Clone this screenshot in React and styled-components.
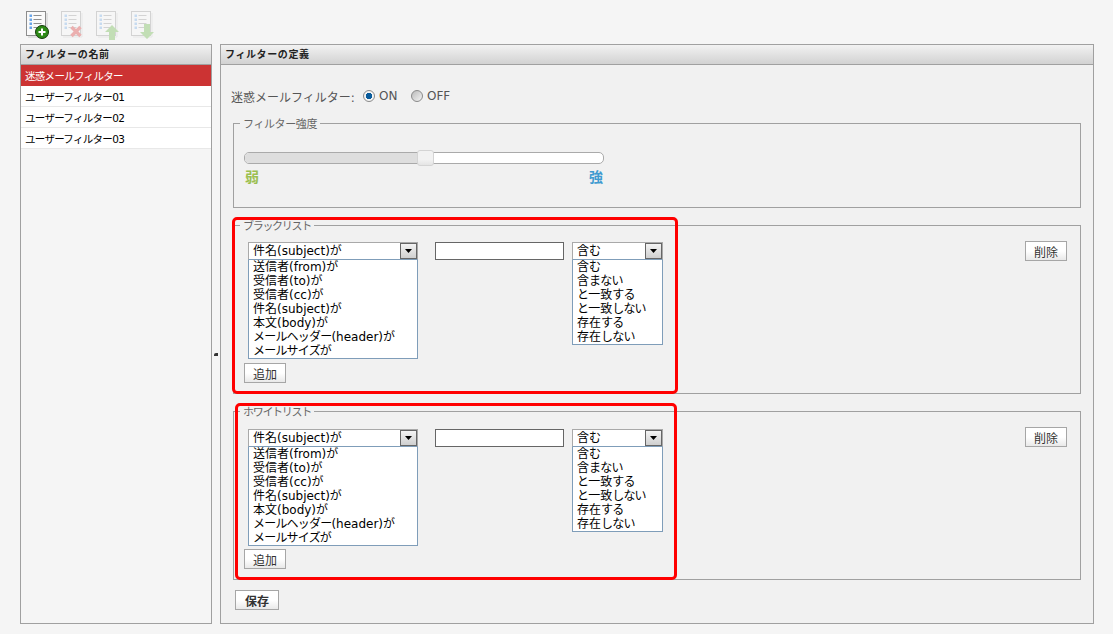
import React from "react";
import styled, { createGlobalStyle } from "styled-components";

const GlobalStyle = createGlobalStyle`
  html, body {
    margin: 0;
    padding: 0;
    background: #f5f5f5;
    font-family: "DejaVu Sans", "Noto Sans CJK JP", sans-serif;
    font-size: 12px;
    color: #000;
  }
  * { box-sizing: border-box; }
`;

const SUBJECTS = [
  "送信者(from)が",
  "受信者(to)が",
  "受信者(cc)が",
  "件名(subject)が",
  "本文(body)が",
  "メールヘッダー(header)が",
  "メールサイズが",
];
const CONDITIONS = ["含む", "含まない", "と一致する", "と一致しない", "存在する", "存在しない"];
const FILTERS = ["迷惑メールフィルター", "ユーザーフィルター01", "ユーザーフィルター02", "ユーザーフィルター03"];

// かなだけ詰める（元画像のプロポーショナルフォントに合わせる）
const renderLabel = (text) =>
  text.split(/([\u3040-\u30ff]+)/).map((part, i) => (i % 2 ? <Kana key={i}>{part}</Kana> : part));

const DocIcon = ({ badge, faded }) => (
  <svg width="28" height="31" viewBox="0 0 28 31" style={{ opacity: faded ? 0.32 : 1 }}>
    <rect x="1.5" y="1.5" width="19" height="24" fill="#fafafa" stroke="#8d8d8d" />
    <path d="M22 3v24H3" fill="none" stroke="#ccc" />
    {[5, 9, 13, 17].map((y) => (
      <g key={y}>
        <rect x="4.5" y={y - 0.5} width="2.5" height="2.5" fill="#6aa5e8" />
        <rect x="8.5" y={y} width="8" height="1" fill="#8f8f8f" />
      </g>
    ))}
    {badge === "add" && (
      <g>
        <circle cx="17" cy="22" r="6.5" fill="#2e8b16" stroke="#143c0a" />
        <path d="M13.5 22h7M17 18.5v7" stroke="#fff" strokeWidth="2" />
      </g>
    )}
    {badge === "delete" && <path d="M11.5 17l9 9M20.5 17l-9 9" stroke="#d81f1f" strokeWidth="3.4" />}
    {badge === "up" && <path d="M17 15l7 7h-4v8h-6v-8h-4z" fill="#58b030" />}
    {badge === "down" && <path d="M17 29l7-7h-4v-8h-6v8h-4z" fill="#58b030" />}
  </svg>
);

const Arrow = () => (
  <svg width="7" height="4" viewBox="0 0 7 4">
    <path d="M0 0h7L3.5 4z" fill="#000" />
  </svg>
);

const SubjectSelect = ({ value, options, width }) => (
  <SelectColumn $width={width}>
    <SelectBox>
      <SelectValue>{renderLabel(value)}</SelectValue>
      <SelectButton>
        <Arrow />
      </SelectButton>
    </SelectBox>
    <OptionList>
      {options.map((option) => (
        <Option key={option}>{renderLabel(option)}</Option>
      ))}
    </OptionList>
  </SelectColumn>
);

const ListSection = ({ title, markLeft, markWidth, lower }) => (
  <Section>
    <SectionLegend $tight>{title}</SectionLegend>
    <RuleRow $lower={lower}>
      <div>
        <RuleFields>
          <SubjectSelect value="件名(subject)が" options={SUBJECTS} width={170} />
          <ValueInput type="text" />
          <SubjectSelect value="含む" options={CONDITIONS} width={91} />
        </RuleFields>
        <AddButton $lower={lower}>追加</AddButton>
      </div>
      <DeleteButton $lower={lower}>削除</DeleteButton>
    </RuleRow>
    <Highlight $left={markLeft} $width={markWidth} />
  </Section>
);

const App = () => {
  return (
    <Page>
      <GlobalStyle />
      <Toolbar>
        <DocIcon badge="add" />
        <DocIcon badge="delete" faded />
        <DocIcon badge="up" faded />
        <DocIcon badge="down" faded />
      </Toolbar>
      <Main>
        <Sidebar>
          <PanelHeader>フィルターの名前</PanelHeader>
          {FILTERS.map((name, i) => (
            <FilterRow key={name} $active={i === 0}>
              {name}
            </FilterRow>
          ))}
        </Sidebar>
        <Splitter>
          <SplitterMark />
        </Splitter>
        <Panel>
          <PanelHeader>フィルターの定義</PanelHeader>
          <PanelBody>
            <RadioRow>
              <RadioLabel>迷惑メールフィルター:</RadioLabel>
              <Radio $checked />
              <RadioText>ON</RadioText>
              <Radio />
              <RadioText>OFF</RadioText>
            </RadioRow>
            <StrengthSection>
              <SectionLegend>フィルター強度</SectionLegend>
              <SliderBlock>
                <SliderTrack>
                  <SliderRange />
                  <SliderHandle />
                </SliderTrack>
                <SliderLabels>
                  <WeakLabel>弱</WeakLabel>
                  <StrongLabel>強</StrongLabel>
                </SliderLabels>
              </SliderBlock>
            </StrengthSection>
            <ListSection title="ブラックリスト" markLeft={-2} markWidth={446} />
            <ListSection title="ホワイトリスト" markLeft={1} markWidth={442} lower />
            <SaveButton>保存</SaveButton>
          </PanelBody>
        </Panel>
      </Main>
    </Page>
  );
};

export default App;

const Page = styled.div`
  width: 1113px;
  height: 634px;
  overflow: hidden;
`;

const Toolbar = styled.div`
  height: 44px;
  padding: 10px 0 0 25px;
  display: flex;
  gap: 7px;
`;

const Main = styled.div`
  display: flex;
  height: 580px;
  padding-left: 20px;
`;

const Sidebar = styled.div`
  width: 192px;
  border: 1px solid #a0a0a0;
  background: #f5f5f5;
`;

const Splitter = styled.div`
  width: 8px;
  display: flex;
  align-items: center;
  justify-content: center;
  padding-top: 40px;
`;

const SplitterMark = styled.div`
  width: 4px;
  height: 3px;
  margin-left: -1px;
  background: #333;
  border-radius: 2px 0 0 0;
`;

const Panel = styled.div`
  width: 874px;
  border: 1px solid #a0a0a0;
  background: #f1f1f1;
`;

const PanelHeader = styled.div`
  height: 20px;
  padding-left: 4px;
  border-bottom: 1px solid #a0a0a0;
  background: linear-gradient(#f2f2f2, #d2d2d2);
  font-family: "Noto Sans CJK JP", sans-serif;
  font-size: 10px;
  font-weight: 700;
  letter-spacing: 0.6px;
  line-height: 18px;
  color: #222;
`;

const FilterRow = styled.div`
  height: 21px;
  padding-left: 4px;
  border-bottom: 1px solid ${({ $active }) => ($active ? "#cc3333" : "#e8e8e8")};
  background: ${({ $active }) => ($active ? "#cc3333" : "#fff")};
  color: ${({ $active }) => ($active ? "#fff" : "#000")};
  font-size: 10.5px;
  letter-spacing: -0.7px;
  line-height: 22px;
`;

const Kana = styled.span`
  letter-spacing: -0.8px;
`;

const PanelBody = styled.div`
  padding: 0 12px;
`;

const RadioRow = styled.div`
  display: flex;
  align-items: center;
  height: 20px;
  margin: 21px 0 11px -2px;
  color: #555;
`;

const RadioLabel = styled.span`
  width: 132px;
  font-size: 12px;
  white-space: nowrap;
`;

const Radio = styled.span`
  width: 12px;
  height: 12px;
  border-radius: 50%;
  border: 1px solid #8a8a8a;
  background: ${({ $checked }) =>
    $checked ? "radial-gradient(circle, #0a5c9c 0 3px, #f4f4f4 3.5px)" : "linear-gradient(135deg, #bbb, #f4f4f4)"};
`;

const RadioText = styled.span`
  width: 32px;
  margin-left: 4px;
  font-size: 12px;
  color: #555;
`;

const Section = styled.fieldset`
  position: relative;
  height: 175px;
  margin: 11px 0 0;
  padding: 0;
  border: 1px solid #a0a0a0;
  min-width: 0;
`;

const StrengthSection = styled(Section)`
  height: 91px;
  margin: 0;
`;

const SectionLegend = styled.legend`
  margin-left: 6px;
  padding: 0 3px;
  font-family: "Noto Sans CJK JP", sans-serif;
  font-size: 11px;
  letter-spacing: ${({ $tight }) => ($tight ? "-1.3px" : "-0.4px")};
  line-height: 13px;
  color: #666;
`;

const SliderBlock = styled.div`
  padding: 22px 0 0 10px;
`;

const SliderTrack = styled.div`
  position: relative;
  width: 360px;
  height: 12px;
  border: 1px solid #aaa;
  border-radius: 5px;
  background: #fff;
`;

const SliderRange = styled.div`
  width: 49%;
  height: 100%;
  border-radius: 4px 0 0 4px;
  background: #dedede;
`;

const SliderHandle = styled.div`
  position: absolute;
  left: 172px;
  top: -3px;
  width: 17px;
  height: 16px;
  border: 1px solid #d4d4d4;
  border-radius: 3px;
  background: linear-gradient(#f2f2f2 60%, #e4e4e4);
`;

const SliderLabels = styled.div`
  width: 360px;
  display: flex;
  justify-content: space-between;
  padding: 3px 1px 0;
  font-family: "Noto Sans CJK JP", sans-serif;
  font-size: 14px;
  font-weight: 700;
  line-height: 18px;
`;

const WeakLabel = styled.span`
  color: #9bbf4f;
`;

const StrongLabel = styled.span`
  color: #3f9bd0;
`;

const RuleRow = styled.div`
  display: flex;
  justify-content: space-between;
  align-items: flex-start;
  padding: ${({ $lower }) => ($lower ? "11px" : "10px")} 13px 0 14px;
`;

const RuleFields = styled.div`
  display: flex;
  align-items: flex-start;
`;

const SelectColumn = styled.div`
  width: ${({ $width }) => $width}px;
`;

const SelectBox = styled.div`
  display: flex;
  align-items: center;
  height: 18px;
  border: 1px solid #a9a9a9;
  border-bottom: 1px solid #7f9db9;
  background: #fff;
`;

const SelectValue = styled.span`
  flex: 1;
  padding-left: 4px;
  font-size: 12px;
  line-height: 16px;
  white-space: nowrap;
`;

const SelectButton = styled.span`
  width: 17px;
  height: 16px;
  display: flex;
  align-items: center;
  justify-content: center;
  border: 1px solid #666;
  background: linear-gradient(#f4f4f4, #cfcfcf);
`;

const OptionList = styled.div`
  border: 1px solid #7f9db9;
  border-top: 0;
  background: #fff;
  overflow: hidden;
`;

const Option = styled.div`
  height: 14px;
  padding-left: 4px;
  font-size: 12px;
  line-height: 14px;
  white-space: nowrap;
`;

const ValueInput = styled.input`
  width: 129px;
  height: 18px;
  margin: 0 8px 0 17px;
  padding: 0;
  border: 1px solid #666;
  background: #fff;
`;

const Button = styled.button`
  height: 20px;
  padding: 0;
  border: 1px solid #a6a6a6;
  border-radius: 0;
  background: linear-gradient(#fff 50%, #e9e9e9);
  font-family: "Noto Sans CJK JP", sans-serif;
  font-size: 12px;
  line-height: 17px;
  color: #333;
`;

const AddButton = styled(Button)`
  display: block;
  width: 42px;
  margin: ${({ $lower }) => ($lower ? "3px" : "4px")} 0 0 -4px;
`;

const DeleteButton = styled(Button)`
  width: 42px;
  margin-top: ${({ $lower }) => ($lower ? "-2px" : "-1px")};
`;

const SaveButton = styled(Button)`
  display: block;
  width: 44px;
  margin: 10px 0 0 2px;
  font-weight: 700;
`;

const Highlight = styled.div`
  position: absolute;
  left: ${({ $left }) => $left}px;
  top: -15px;
  width: ${({ $width }) => $width}px;
  height: 177px;
  border: 3px solid #ff0000;
  border-radius: 5px;
  pointer-events: none;
`;
